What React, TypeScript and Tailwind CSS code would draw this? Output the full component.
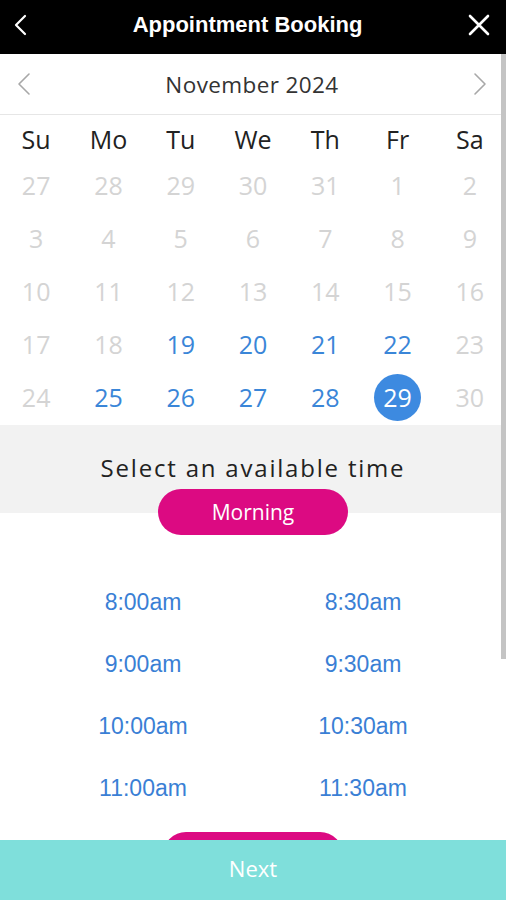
import React from "react";

const rows: { d: number; on: boolean }[][] = [
  [27, 28, 29, 30, 31, 1, 2].map((d) => ({ d, on: false })),
  [3, 4, 5, 6, 7, 8, 9].map((d) => ({ d, on: false })),
  [10, 11, 12, 13, 14, 15, 16].map((d) => ({ d, on: false })),
  [17, 18, 19, 20, 21, 22, 23].map((d) => ({ d, on: d >= 19 && d <= 22 })),
  [24, 25, 26, 27, 28, 29, 30].map((d) => ({ d, on: d >= 25 && d <= 29 })),
];

const days = ["Su", "Mo", "Tu", "We", "Th", "Fr", "Sa"];
const times = [
  ["8:00am", "8:30am"],
  ["9:00am", "9:30am"],
  ["10:00am", "10:30am"],
  ["11:00am", "11:30am"],
];

export default function App() {
  return (
    <div className="relative h-[900px] w-[506px] overflow-hidden bg-white flex flex-col">
      {/* Header */}
      <div className="h-[54px] shrink-0 bg-black flex items-center justify-between px-[13px]">
        <svg width="14" height="22" viewBox="0 0 14 22" className="mb-[4px]">
          <path d="M12 2 L3 11 L12 20" fill="none" stroke="white" strokeWidth="2.2" strokeLinecap="round" strokeLinejoin="round" />
        </svg>
        <div className="pb-[4px] text-white text-[22px] font-bold leading-none [font-family:'Liberation_Sans',Arial,sans-serif]">
          Appointment Booking
        </div>
        <svg width="22" height="22" viewBox="0 0 22 22" className="mr-[3px] mb-[4px]">
          <path d="M2 2 L20 20 M20 2 L2 20" fill="none" stroke="white" strokeWidth="2.6" strokeLinecap="round" />
        </svg>
      </div>

      <div className="flex-1 flex flex-col overflow-hidden [font-family:'Open_Sans',sans-serif]">
        {/* Month nav */}
        <div className="h-[61px] shrink-0 flex items-center justify-between px-[16px] border-b border-[#e6e6e6]">
          <svg width="16" height="24" viewBox="0 0 16 24">
            <path d="M13 2 L3 12 L13 22" fill="none" stroke="#a8a8a8" strokeWidth="1.6" strokeLinecap="round" strokeLinejoin="round" />
          </svg>
          <div className="pt-[2px] text-[22.5px] text-[#333] tracking-[0.4px] leading-none">November 2024</div>
          <svg width="16" height="24" viewBox="0 0 16 24" className="mr-[2px]">
            <path d="M3 2 L13 12 L3 22" fill="none" stroke="#a8a8a8" strokeWidth="1.6" strokeLinecap="round" strokeLinejoin="round" />
          </svg>
        </div>

        {/* Day names */}
        <div className="grid grid-cols-7 h-[44px] shrink-0 items-center pt-[4px]">
          {days.map((d) => (
            <div key={d} className="text-center text-[25px] text-[#222] leading-none">
              {d}
            </div>
          ))}
        </div>

        {/* Dates */}
        {rows.map((r, i) => (
          <div key={i} className="grid grid-cols-7 h-[53px] shrink-0 items-center">
            {r.map((c, j) => (
              <div key={j} className="flex justify-center items-center">
                {c.d === 29 && i === 4 ? (
                  <div className="w-[47px] h-[47px] rounded-full bg-[#3d8ae0] text-white text-[25px] flex items-center justify-center leading-none">
                    29
                  </div>
                ) : (
                  <span className={"text-[25px] leading-none " + (c.on ? "text-[#3a86d8]" : "text-[#d4d4d4]")}>{c.d}</span>
                )}
              </div>
            ))}
          </div>
        ))}

        {/* Select time */}
        <div className="h-[88px] shrink-0 bg-[#f2f2f2] flex justify-center pt-[31px] mt-[1px]">
          <div className="text-[24px] text-[#222] tracking-[1.8px] leading-none">Select an available time</div>
        </div>
        <div className="flex justify-center -mt-[24px] shrink-0">
          <div className="w-[190px] h-[46px] rounded-full bg-[#dc0a82] text-white text-[21px] font-medium flex items-center justify-center leading-none">
            Morning
          </div>
        </div>

        {/* Times */}
        <div className="w-[440px] mx-auto mt-[36px] grid grid-cols-2 shrink-0 [font-family:'Liberation_Sans',Arial,sans-serif]">
          {times.map((row, i) => (
            <React.Fragment key={i}>
              {row.map((t) => (
                <div key={t} className="h-[62px] flex items-center justify-center text-[23px] text-[#3a7fd5] leading-none">
                  {t}
                </div>
              ))}
            </React.Fragment>
          ))}
        </div>
        <div className="flex justify-center mt-[13px] shrink-0">
          <div className="w-[180px] h-[46px] rounded-full bg-[#dc0a82]" />
        </div>
      </div>

      {/* Next bar */}
      <div className="h-[60px] shrink-0 bg-[#7fdfdb] flex items-center justify-center pb-[4px] [font-family:'Open_Sans',sans-serif]">
        <span className="text-white text-[22px] leading-none">Next</span>
      </div>

      {/* Scrollbar overlay */}
      <div className="absolute right-0 top-[54px] w-[5px] h-[605px] bg-[#c4c4c4]" />
    </div>
  );
}
